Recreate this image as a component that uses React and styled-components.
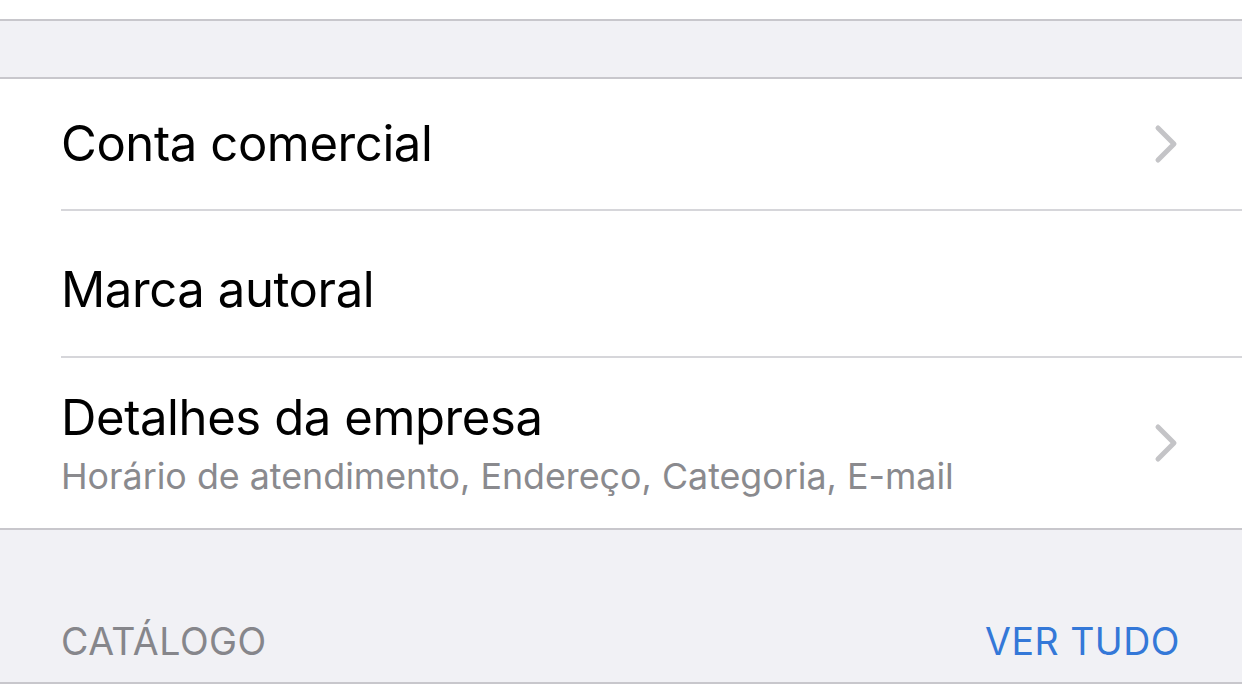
import React from 'react';
import styled, { createGlobalStyle } from 'styled-components';

const Global = createGlobalStyle`
  html, body {
    margin: 0;
    padding: 0;
    background: #ffffff;
    font-family: Inter, "Noto Sans", sans-serif;
    -webkit-font-smoothing: antialiased;
  }
  * { box-sizing: border-box; }
`;

const Page = styled.div`
  width: 1242px;
  height: 699px;
  overflow: hidden;
  display: flex;
  flex-direction: column;
  background: #ffffff;
`;

const TopCap = styled.div`
  height: 21px;
  flex-shrink: 0;
  background: #ffffff;
  border-bottom: 2px solid #c8c7cc;
`;

const Spacer = styled.div`
  height: ${(p) => p.h}px;
  flex-shrink: 0;
  background: #f1f1f5;
  border-bottom: 2px solid #c8c7cc;
`;

const Group = styled.div`
  background: #ffffff;
  display: flex;
  flex-direction: column;
  flex-shrink: 0;
`;

const Row = styled.div`
  display: flex;
  align-items: center;
  height: ${(p) => p.h}px;
  margin-left: 61px;
  padding-right: 62px;
  border-bottom: ${(p) => (p.last ? 'none' : '2px solid #d6d6da')};
`;

const Texts = styled.div`
  flex: 1;
  display: flex;
  flex-direction: column;
  padding-top: ${(p) => p.pt || 0}px;
`;

const Title = styled.div`
  font-size: 49px;
  color: #000000;
  letter-spacing: -0.4px;
  line-height: 60px;
`;

const Subtitle = styled.div`
  font-size: 35.8px;
  color: #8a8a8e;
  line-height: 44px;
  margin-top: 6px;
`;

const Chevron = styled.svg`
  width: 26px;
  height: 40px;
  flex-shrink: 0;
`;

const SectionHeader = styled.div`
  height: 156px;
  flex-shrink: 0;
  background: #f1f1f5;
  border-top: 2px solid #c8c7cc;
  border-bottom: 2px solid #c8c7cc;
  display: flex;
  align-items: flex-end;
  justify-content: space-between;
  padding: 0 62px 18px 61px;
`;

const HeaderLabel = styled.span`
  font-size: 37.5px;
  color: #86868b;
  letter-spacing: 0.5px;
`;

const HeaderLink = styled.span`
  font-size: 37.5px;
  color: #3478d8;
  letter-spacing: 0.5px;
`;

const Bottom = styled.div`
  flex: 1;
  background: #ffffff;
`;

const Arrow = () => (
  <Chevron viewBox="0 0 26 40">
    <path d="M4 4 L20 20 L4 36" fill="none" stroke="#c4c4c7" strokeWidth="5" strokeLinecap="round" strokeLinejoin="round" />
  </Chevron>
);

export default function App() {
  return (
    <Page>
      <Global />
      <TopCap />
      <Spacer h={58} />
      <Group>
        <Row h={132}>
          <Texts>
            <Title>Conta comercial</Title>
          </Texts>
          <Arrow />
        </Row>
        <Row h={147}>
          <Texts pt={12}>
            <Title>Marca autoral</Title>
          </Texts>
        </Row>
        <Row h={170} last>
          <Texts>
            <Title>Detalhes da empresa</Title>
            <Subtitle>Horário de atendimento, Endereço, Categoria, E-mail</Subtitle>
          </Texts>
          <Arrow />
        </Row>
      </Group>
      <SectionHeader>
        <HeaderLabel>CATÁLOGO</HeaderLabel>
        <HeaderLink>VER TUDO</HeaderLink>
      </SectionHeader>
      <Bottom />
    </Page>
  );
}
